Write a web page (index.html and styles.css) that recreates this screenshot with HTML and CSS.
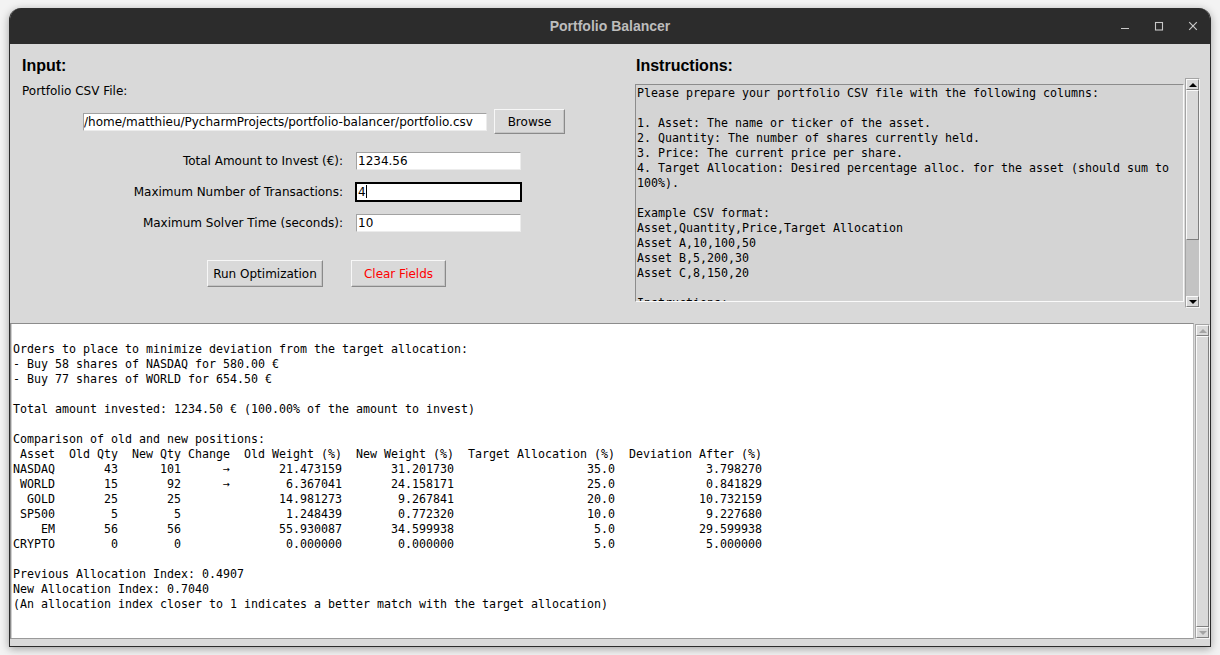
FILE: index.html
```html
<!DOCTYPE html>
<html>
<head>
<meta charset="utf-8">
<title>Portfolio Balancer</title>
<link rel="stylesheet" href="styles.css">
</head>
<body>
<div class="window">
  <div class="titlebar">
    <div></div>
    <div class="title">Portfolio Balancer</div>
    <div class="controls">
      <span class="ctl"><svg width="10" height="10" viewBox="0 0 10 10"><path d="M1 7.5H9" stroke="#c9c9c9" stroke-width="1.2" fill="none"/></svg></span>
      <span class="ctl"><svg width="10" height="10" viewBox="0 0 10 10"><rect x="1.5" y="1.5" width="7" height="7.5" stroke="#c9c9c9" stroke-width="1.1" fill="none"/></svg></span>
      <span class="ctl"><svg width="10" height="10" viewBox="0 0 10 10"><path d="M1.2 1.2L8.8 8.8M8.8 1.2L1.2 8.8" stroke="#c9c9c9" stroke-width="1.2" fill="none"/></svg></span>
    </div>
  </div>
  <div class="content">
    <div class="top">
      <section class="input-panel">
        <h2 class="heading">Input:</h2>
        <div class="file-label">Portfolio CSV File:</div>
        <div class="file-row">
          <div class="entry entry-path">/home/matthieu/PycharmProjects/portfolio-balancer/portfolio.csv</div>
          <div class="btn btn-browse">Browse</div>
        </div>
        <div class="form-grid">
          <div class="flabel">Total Amount to Invest (€):</div>
          <div class="entry">1234.56</div>
          <div class="flabel">Maximum Number of Transactions:</div>
          <div class="entry entry-focus">4<span class="caret"></span></div>
          <div class="flabel">Maximum Solver Time (seconds):</div>
          <div class="entry">10</div>
        </div>
        <div class="btn-row">
          <div class="btn btn-run">Run Optimization</div>
          <div class="btn btn-clear">Clear Fields</div>
        </div>
      </section>
      <section class="instr-panel">
        <h2 class="heading">Instructions:</h2>
        <div class="instr-row">
<pre class="instr-text">Please prepare your portfolio CSV file with the following columns:

1. Asset: The name or ticker of the asset.
2. Quantity: The number of shares currently held.
3. Price: The current price per share.
4. Target Allocation: Desired percentage alloc. for the asset (should sum to
100%).

Example CSV format:
Asset,Quantity,Price,Target Allocation
Asset A,10,100,50
Asset B,5,200,30
Asset C,8,150,20

Instructions:</pre>
          <div class="vscroll">
            <div class="sb-arrow"><span class="tri-up"></span></div>
            <div class="sb-thumb"></div>
            <div class="sb-trough"></div>
            <div class="sb-arrow"><span class="tri-down"></span></div>
          </div>
        </div>
      </section>
    </div>
    <div class="output-row">
<pre class="output">

Orders to place to minimize deviation from the target allocation:
- Buy 58 shares of NASDAQ for 580.00 €
- Buy 77 shares of WORLD for 654.50 €

Total amount invested: 1234.50 € (100.00% of the amount to invest)

Comparison of old and new positions:
<span class="ca">Asset</span><span class="cq">Old Qty</span><span class="cq">New Qty</span><span class="cc">Change</span><span class="cw">Old Weight (%)</span><span class="cw">New Weight (%)</span><span class="ct">Target Allocation (%)</span><span class="cd">Deviation After (%)</span>
<span class="ca">NASDAQ</span><span class="cq">43</span><span class="cq">101</span><span class="cc">→</span><span class="cw">21.473159</span><span class="cw">31.201730</span><span class="ct">35.0</span><span class="cd">3.798270</span>
<span class="ca">WORLD</span><span class="cq">15</span><span class="cq">92</span><span class="cc">→</span><span class="cw">6.367041</span><span class="cw">24.158171</span><span class="ct">25.0</span><span class="cd">0.841829</span>
<span class="ca">GOLD</span><span class="cq">25</span><span class="cq">25</span><span class="cc"></span><span class="cw">14.981273</span><span class="cw">9.267841</span><span class="ct">20.0</span><span class="cd">10.732159</span>
<span class="ca">SP500</span><span class="cq">5</span><span class="cq">5</span><span class="cc"></span><span class="cw">1.248439</span><span class="cw">0.772320</span><span class="ct">10.0</span><span class="cd">9.227680</span>
<span class="ca">EM</span><span class="cq">56</span><span class="cq">56</span><span class="cc"></span><span class="cw">55.930087</span><span class="cw">34.599938</span><span class="ct">5.0</span><span class="cd">29.599938</span>
<span class="ca">CRYPTO</span><span class="cq">0</span><span class="cq">0</span><span class="cc"></span><span class="cw">0.000000</span><span class="cw">0.000000</span><span class="ct">5.0</span><span class="cd">5.000000</span>

Previous Allocation Index: 0.4907
New Allocation Index: 0.7040
(An allocation index closer to 1 indicates a better match with the target allocation)</pre>
      <div class="vscroll vscroll-out">
        <div class="sb-arrow sb-arrow-dis"><span class="tri-up"></span></div>
        <div class="sb-thumb sb-thumb-full"></div>
        <div class="sb-arrow sb-arrow-dis"><span class="tri-down"></span></div>
      </div>
    </div>
  </div>
</div>
</body>
</html>
```
FILE: styles.css
```css
html, body {
  margin: 0;
  padding: 0;
}
body {
  background: #f3f3f3;
  width: 1220px;
  height: 655px;
  overflow: hidden;
  font-family: "DejaVu Sans", sans-serif;
  font-size: 12px;
  color: #000;
}
.window {
  margin: 8px 0 0 9px;
  width: 1202px;
  height: 639px;
  box-sizing: border-box;
  border: 1px solid #2b2b2b;
  border-top: none;
  border-radius: 12px 12px 0 0;
  overflow: hidden;
  background: #d9d9d9;
  box-shadow: 0 2px 9px rgba(0, 0, 0, 0.35);
  display: flex;
  flex-direction: column;
}
.titlebar {
  height: 36px;
  flex: none;
  background: #2c2c2c;
  display: grid;
  grid-template-columns: 1fr auto 1fr;
  align-items: center;
}
.title {
  font: bold 14px "Liberation Sans", sans-serif;
  color: #bdbdbd;
}
.controls {
  justify-self: end;
  display: flex;
}
.ctl {
  width: 34px;
  height: 24px;
  display: flex;
  align-items: center;
  justify-content: center;
}
.content {
  flex: 1;
  display: flex;
  flex-direction: column;
}
.top {
  height: 279px;
  flex: none;
  display: flex;
}
.heading {
  margin: 0;
  font: bold 16px/20px "Liberation Sans", sans-serif;
}
.input-panel {
  width: 613px;
  flex: none;
  box-sizing: border-box;
  padding: 12px 0 0 12px;
}
.file-label {
  margin-top: 8px;
  line-height: 15px;
}
.file-row {
  display: flex;
  align-items: center;
  gap: 7px;
  margin: 10px 0 0 61px;
}
.entry {
  background: #fff;
  height: 18px;
  box-sizing: border-box;
  border: 1px solid;
  border-color: #a2a2a2 #ececec #ececec #a2a2a2;
  line-height: 16px;
  padding: 0 1px;
  white-space: nowrap;
  overflow: hidden;
  position: relative;
}
.entry-path {
  width: 404px;
  padding-left: 0;
}
.entry-focus {
  border-color: #000;
  box-shadow: 0 0 0 1px #000;
}
.caret {
  display: inline-block;
  width: 1px;
  height: 13px;
  background: #000;
  vertical-align: -2px;
}
.btn {
  box-sizing: border-box;
  height: 25px;
  display: flex;
  align-items: center;
  justify-content: center;
  background: #d9d9d9;
  border: 1px solid;
  border-color: #f7f7f7 #8a8a8a #8a8a8a #f7f7f7;
  box-shadow: inset -1px -1px 0 #c4c4c4;
}
.btn-browse {
  width: 71px;
}
.form-grid {
  display: grid;
  grid-template-columns: 321px 165px;
  column-gap: 13px;
  row-gap: 11px;
  grid-auto-rows: 20px;
  align-items: center;
  margin-top: 17px;
}
.flabel {
  text-align: right;
  line-height: 15px;
}
.btn-row {
  display: flex;
  gap: 28px;
  margin: 27px 0 0 185px;
}
.btn-run {
  width: 116px;
  height: 27px;
}
.btn-clear {
  width: 95px;
  height: 27px;
  color: #ff0000;
}
.instr-panel {
  flex: 1;
  box-sizing: border-box;
  padding: 12px 0 0 12px;
}
.instr-panel .heading {
  margin-left: 1px;
}
.instr-row {
  display: flex;
  align-items: flex-start;
  gap: 1px;
  margin-top: 2px;
}
.instr-text {
  margin: 6px 0 0;
  width: 549px;
  height: 218px;
  flex: none;
  box-sizing: border-box;
  border: 1px solid;
  border-color: #8c8c8c #fafafa #fafafa #8c8c8c;
  background: #d4d4d4;
  padding: 1px;
  overflow: hidden;
  font: 11.63px/15px "DejaVu Sans Mono", monospace;
  white-space: pre;
}
.vscroll {
  width: 15px;
  height: 230px;
  flex: none;
  box-sizing: border-box;
  border: 1px solid;
  border-color: #a4a4a4 #f4f4f4 #f4f4f4 #a4a4a4;
  background: #c3c3c3;
  display: flex;
  flex-direction: column;
}
.sb-arrow {
  height: 11px;
  flex: none;
  box-sizing: border-box;
  background: #d9d9d9;
  border: 1px solid;
  border-color: #fafafa #7f7f7f #7f7f7f #fafafa;
  display: flex;
  align-items: center;
  justify-content: center;
}
.tri-up {
  width: 0;
  height: 0;
  border-left: 4px solid transparent;
  border-right: 4px solid transparent;
  border-bottom: 4px solid #000;
}
.tri-down {
  width: 0;
  height: 0;
  border-left: 4px solid transparent;
  border-right: 4px solid transparent;
  border-top: 4px solid #000;
}
.sb-thumb {
  height: 150px;
  flex: none;
  box-sizing: border-box;
  background: #d9d9d9;
  border: 1px solid;
  border-color: #fafafa #7f7f7f #7f7f7f #fafafa;
}
.sb-trough {
  flex: 1;
}
.output-row {
  display: flex;
  gap: 1px;
  height: 316px;
  flex: none;
}
.output {
  margin: 0;
  width: 1184px;
  height: 316px;
  flex: none;
  box-sizing: border-box;
  background: #fff;
  border: 1px solid;
  border-color: #8c8c8c #bcbcbc #9a9a9a #8c8c8c;
  box-shadow: inset 1px 0 0 #d0d0d0;
  padding: 3px 2px;
  overflow: hidden;
  font: 11.63px/15px "DejaVu Sans Mono", monospace;
  white-space: pre;
}
.output span {
  display: inline-block;
  text-align: right;
  vertical-align: top;
}
.output .ca { width: 42px; }
.output .cq { width: 63px; }
.output .cc { width: 49px; }
.output .cw { width: 112px; }
.output .ct { width: 161px; }
.output .cd { width: 147px; }
.vscroll-out {
  height: 315px;
  margin-top: 1px;
  background: #d9d9d9;
}
.sb-thumb-full {
  flex: 1;
  height: auto;
}
.sb-arrow-dis .tri-up {
  border-bottom-color: #a3a3a3;
}
.sb-arrow-dis .tri-down {
  border-top-color: #a3a3a3;
}
```
